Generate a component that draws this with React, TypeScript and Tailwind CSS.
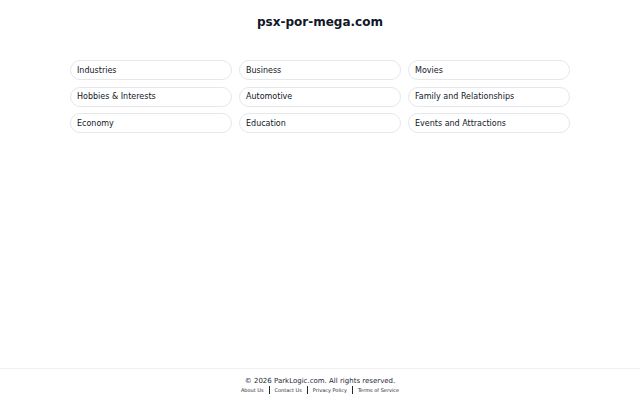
import React from 'react';

const categories = [
  'Industries',
  'Business',
  'Movies',
  'Hobbies & Interests',
  'Automotive',
  'Family and Relationships',
  'Economy',
  'Education',
  'Events and Attractions',
];

const links = ['About Us', 'Contact Us', 'Privacy Policy', 'Terms of Service'];

export default function App() {
  return (
    <div className="flex min-h-screen flex-col bg-white font-['DejaVu_Sans',sans-serif] text-[#111827]">
      <main className="flex-1">
        <h1 className="pt-[13px] text-center text-[12px] font-bold leading-[18px]">psx-por-mega.com</h1>
        <div className="mx-auto mt-[29px] grid w-[500px] grid-cols-3 gap-x-[7px] gap-y-[6.5px]">
          {categories.map((c) => (
            <a
              key={c}
              href="#"
              className="flex h-[20px] items-center rounded-full border border-[#e5e7eb] px-[6px] pt-[1px] text-[8px] text-[#111827]"
            >
              {c}
            </a>
          ))}
        </div>
      </main>
      <footer className="h-[32px] border-t border-[#f0f0f0] pt-[8px] text-center">
        <p className="text-[7px] leading-[9px] text-[#1f2937]">© 2026 ParkLogic.com. All rights reserved.</p>
        <div className="flex items-center justify-center text-[5px] leading-[8px] text-[#1f2937]">
          {links.map((l, i) => (
            <React.Fragment key={l}>
              {i > 0 && <span className="mx-[5px] h-[8px] w-px bg-[#1f2937]" />}
              <a href="#">{l}</a>
            </React.Fragment>
          ))}
        </div>
      </footer>
    </div>
  );
}
